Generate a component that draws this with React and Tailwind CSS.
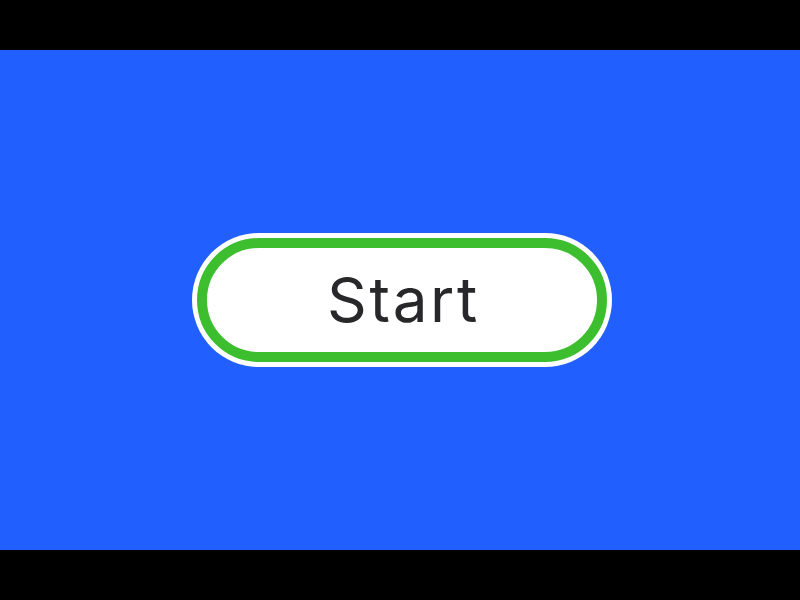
import React from 'react';

const App = () => {
  return (
    <div className="w-[800px] h-[600px] bg-black flex flex-col">
      <div className="h-[50px] bg-black" />
      <div className="h-[500px] bg-[#2160fe] flex items-center justify-center">
        {/* outer white rim */}
        <button className="ml-[4px] w-[420px] h-[134px] rounded-full bg-white p-[5px]">
          <div className="w-full h-full rounded-full border-[10px] border-[#3cbe2f] bg-white flex items-center justify-center">
            <span
              className="text-[62px] leading-none text-[#28282b] tracking-[2.6px] pl-[3px]"
              style={{ fontFamily: 'Inter, "Noto Sans", sans-serif' }}
            >
              Start
            </span>
          </div>
        </button>
      </div>
      <div className="h-[50px] bg-black" />
    </div>
  );
};

export default App;
